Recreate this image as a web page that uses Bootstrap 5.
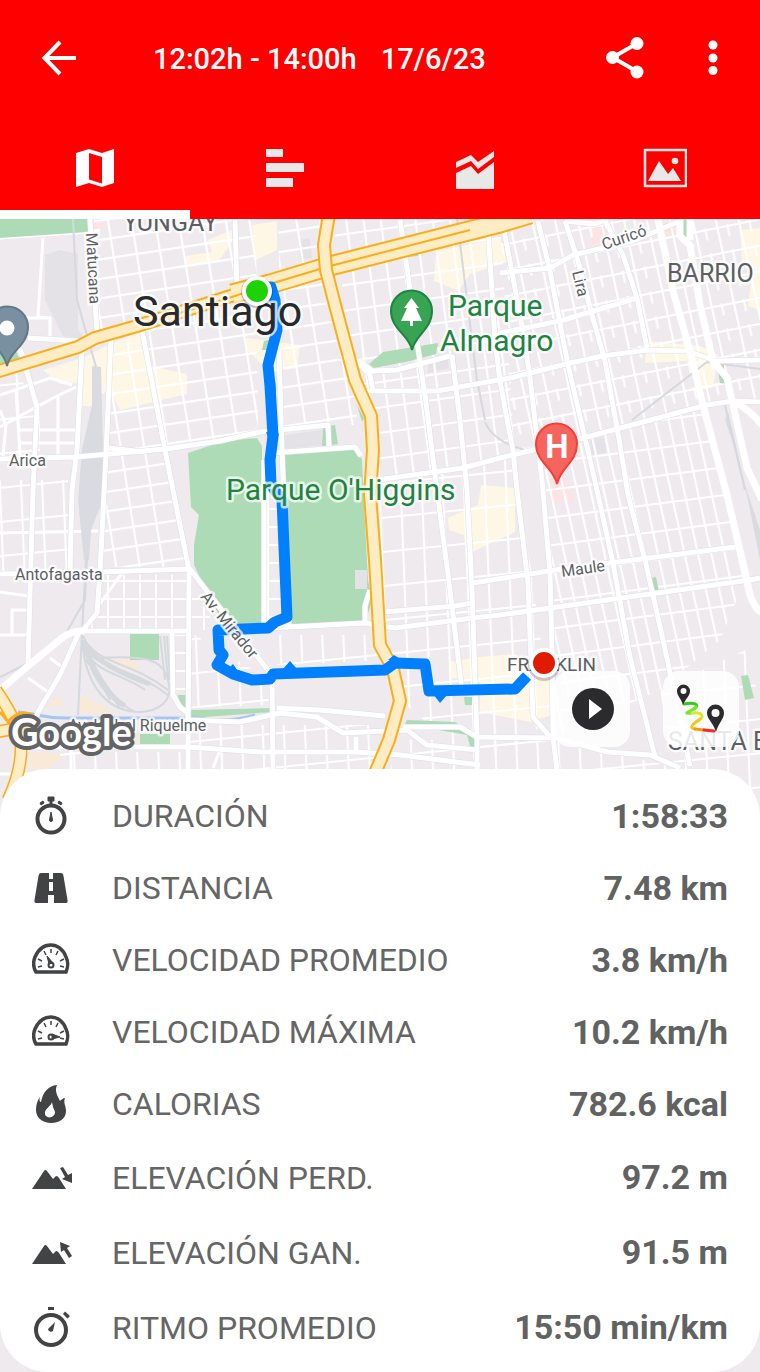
<!DOCTYPE html>
<html lang="es">
<head>
<meta charset="utf-8">
<meta name="viewport" content="width=device-width, initial-scale=1">
<title>Recorrido 17/6/23</title>
<link href="https://cdn.jsdelivr.net/npm/bootstrap@5.3.0/dist/css/bootstrap.min.css" rel="stylesheet">
<style>
  body { font-family: Roboto, "Liberation Sans", sans-serif; background: #eeeaee; }
  .app-header { background: #f00; color: #fff; }
  .app-bar { height: 117px; padding: 0 23px 0 36px; }
  .app-title { font-size: 29px; line-height: 36px; font-weight: 500; margin-left: 69px; gap: 24px; }
  .icon-btn { background: none; border: 0; padding: 0; color: inherit; width: 48px; height: 48px; display: flex; align-items: center; justify-content: center; }
  .app-actions { gap: 40px; }
  .tab-link { height: 102px; color: #e8e8e8; display: flex; align-items: center; justify-content: center; border-bottom: 9px solid transparent; padding-top: 9px; }
  .tab-link.active { color: #fff; border-bottom-color: #fff; }
  .city-map { z-index: 0; }
  .map-tools { min-height: 320px; gap: 33px; padding: 0 21px 22px; z-index: 1; }
  .map-btn { width: 76px; height: 76px; border: 0; border-radius: 16px; background: rgba(255,255,255,.86); padding: 0; }
  .stats { z-index: 1; background: #fff; border-radius: 48px; padding: 11px 32px 7px; }
  .stat-row { height: 72px; }
  .stat-row.tall { height: 75px; }
  .stat-icon { width: 40px; height: 44px; color: #424345; margin-right: 40px; }
  .stat-name { font-size: 32px; color: #666; }
  .stat-value { font-size: 34px; font-weight: 700; color: #616362; }
  .street { font-size: 16px; fill: #5c5f62; }
  .district { font-size: 25px; fill: #5c5f62; }
  .park-name { font-size: 30px; fill: #1e8440; }
  .halo text { paint-order: stroke; stroke: rgba(255,255,255,.72); stroke-width: 5px; stroke-linejoin: round; }
  .blocks path { stroke: #fff; stroke-width: 2px; fill: none; }
</style>
</head>
<body class="min-vh-100 d-flex flex-column">
<header class="app-header">
  <div class="app-bar d-flex align-items-center">
    <button class="icon-btn" type="button" aria-label="Volver">
      <svg width="48" height="48" fill="none" stroke="currentColor" stroke-width="4"><path d="M40 23H9M24 7L8.500 23L24 39"/></svg>
    </button>
    <div class="app-title d-flex flex-grow-1"><span>12:02h - 14:00h</span><span>17/6/23</span></div>
    <div class="app-actions d-flex">
    <button class="icon-btn" type="button" aria-label="Compartir">
      <svg width="48" height="48"><path d="M36 8.500L11.500 22.500L36 36.500" fill="none" stroke="currentColor" stroke-width="4"/><g fill="currentColor"><circle cx="36" cy="8.500" r="6.500"/><circle cx="11.500" cy="22.500" r="6.500"/><circle cx="36" cy="37" r="6.500"/></g></svg>
    </button>
    <button class="icon-btn" type="button" aria-label="Más opciones">
      <svg width="48" height="48" fill="currentColor"><circle cx="24" cy="10" r="4.500"/><circle cx="24" cy="23" r="4.500"/><circle cx="24" cy="35.500" r="4.500"/></svg>
    </button>
    </div>
  </div>
  <nav class="row g-0" aria-label="Vistas">
    <a class="tab-link col-3 active" href="#mapa" aria-label="Mapa" aria-current="page">
      <svg width="40" height="40" fill="currentColor"><path fill-rule="evenodd" d="M1 5L14 1L27 5L39 1V35L27 39L14 35L1 39ZM14 5V31.500L27 35.500V9Z"/></svg>
    </a>
    <a class="tab-link col-3" href="#tramos" aria-label="Tramos">
      <svg width="40" height="40" fill="currentColor"><path d="M1 1H18V9H1ZM1 15H39V24H1ZM1 30H28V39H1Z"/></svg>
    </a>
    <a class="tab-link col-3" href="#graficos" aria-label="Gráficos">
      <svg class="overflow-visible" width="40" height="40" fill="currentColor"><path d="M1 14L16 7L23 14L39 3V9L23 21L16 13L1 20ZM1 25L16 18L23 26L39 14V41H1Z"/></svg>
    </a>
    <a class="tab-link col-3" href="#fotos" aria-label="Fotos">
      <svg width="44" height="40"><rect x="2" y="2" width="41" height="36" fill="none" stroke="currentColor" stroke-width="2.500"/><path d="M5 33L16 13L25 26L30 20L38 33Z" fill="currentColor"/><circle cx="32" cy="13" r="3.300" fill="currentColor"/></svg>
    </a>
  </nav>
</header>

<main class="position-relative flex-grow-1 d-flex flex-column overflow-hidden" id="mapa">
  <svg class="city-map position-absolute top-0 start-0 w-100 h-100" viewBox="0 219 760 1153" preserveAspectRatio="xMidYMin slice" role="img" aria-label="Mapa del recorrido en Santiago">
    <defs class="blocks">
      <pattern id="blocksA" width="23" height="19" patternUnits="userSpaceOnUse" patternTransform="matrix(1 -.15 .16 1 0 0)"><path d="M0 2H23M2 0V19"/></pattern>
      <pattern id="blocksB" width="17" height="25" patternUnits="userSpaceOnUse" patternTransform="matrix(1 -.14 .13 1 4 0)"><path d="M0 2H17M2 0V25"/></pattern>
      <pattern id="blocksC" width="22" height="25" patternUnits="userSpaceOnUse" patternTransform="matrix(1 -.2 .22 1 0 4)"><path d="M0 2H22M2 0V25M12 0V12"/></pattern>
      <pattern id="blocksD" width="13" height="27" patternUnits="userSpaceOnUse" patternTransform="matrix(1 -.13 .22 1 0 4)"><path d="M0 2H13M2 0V27"/></pattern>
      <pattern id="blocksE" width="16" height="18" patternUnits="userSpaceOnUse"><path d="M0 5H16M12 0V18"/></pattern>
      <pattern id="blocksF" width="21" height="34" patternUnits="userSpaceOnUse" patternTransform="matrix(1 -.1 .04 1 0 8)"><path d="M0 2H21M2 0V34"/></pattern>
    </defs>
    <defs>
      <g id="avenues">
        <path d="M90 219L97 333M82 350L77 450L72 490L70 573M111 338L106 455L100 572L97 613L83 630M142 330L165 450L189 570L188 770M20 348L37 407L33 490L28 663M0 459L75 457L110 454L165 449L220 441L260 432L328 425L329 446M108 448L145 452M270 453L355 447L361 456M28 338L80 341M0 574L100 572L190 569L274 678M80 630L60 675L38 712L20 770M80 631H188M172 633L173 695L180 707L188 713V720L240 722L280 713L317 717L343 733L407 730L427 745L477 750M30 747H83L188 747L260 752L355 752L400 755L480 765"/>
        <path d="M235 219L237 290M279 350L282 450L289 628M400 219L410 290L420 362L425 395L437 490L450 590L462 690M488 228L495 340L500 381L513 451L517 490L528 583L533 717L550 737M452 355L460 421L467 490L472 590L477 737V790M503 225L522 325L530 378L542 480L550 573L552 650L553 737L557 770M538 221L550 271L568 365L585 438L597 490L613 563L630 657L655 757M565 221L578 261L592 315L605 361L620 445L628 495L645 560L663 640L690 766M605 221L623 255L637 298L647 348"/>
        <path d="M500 273L550 268L573 255L633 241L680 221M565 221L595 224L608 219M500 333L560 321L637 298M358 360L372 371L397 370L450 356M367 391L437 391L510 378L570 363L603 356L647 350L687 351L717 361L760 360M377 480L463 468L500 458L583 438L707 405L733 401L760 402M383 612L455 606L472 603M473 583L555 570L735 547M270 628L365 623L395 628L473 618L500 615L750 580L760 578M264 460V628M272 675L273 770M277 708L320 710L385 716M403 727H460L477 737L557 738L607 752L650 755L680 768M356 737V750M365 623V606L370 590M353 358L370 375L373 391"/>
      </g>
    </defs>
    <rect y="219" width="760" height="1153" fill="#eeeaee"/>

    <!-- built-up, commercial and hospital areas -->
    <g fill="#e5e2e7"><path d="M45 255L60 250L78 254V330L90 345L70 350L45 300ZM299 240L310 238L312 258L300 260ZM285 435L322 430V445L285 449ZM590 440L605 436L606 453L592 455ZM428 364L448 359L449 368L428 373Z"/></g>
    <g fill="#fef7e5">
      <path d="M43 370L82 358L140 330L150 366L187 374V394L120 410L110 390L95 398L93 406H82V383L60 384ZM185 256L212 252L208 240L232 230V242L218 262L186 266ZM252 225L277 221L277 250L256 260ZM246 338L300 345L297 368L270 372L247 350ZM436 251L458 247L500 238L507 262L470 274L458 291L434 281Z"/>
      <path d="M646 341L700 346L718 355L713 388L702 389L688 361L645 363ZM448 518L478 505L481 485L515 488V532L466 555L464 535L449 530ZM450 662L478 657L515 654L551 680L552 715L530 722L480 712V682L452 678ZM740 230L760 228V310L748 306L752 275L742 262Z"/>
    </g>
    <g fill="#f9ead7"><path d="M80 695L116 713H80ZM104 660H134L142 670L124 668ZM46 706L58 696L65 706ZM30 752L65 754L48 770L28 768ZM104 728H139V745H112Z"/></g>
    <g fill="#fde3e3"><path d="M93 219H103V229L93 230ZM592 229L607 225L615 241L590 246ZM663 222L674 223L676 236L665 239ZM548 478L566 478L574 501L549 503Z"/></g>

    <!-- minor street grid -->
    <path fill="url(#blocksA)" d="M94 219H256L258 436L166 448L143 333L96 340ZM113 338L140 338L164 450L109 450Z"/>
    <path fill="url(#blocksA)" d="M108 455L166 450L188 567H103ZM278 215H320L328 290L358 410L355 425L282 430Z"/>
    <path fill="url(#blocksB)" d="M340 266L500 225L515 455L376 480L375 420L350 360ZM335 219H480L335 255Z"/>
    <path fill="url(#blocksC)" d="M500 219H760V398L707 405L583 438L513 453Z"/>
    <path fill="url(#blocksD)" d="M583 440L705 407L745 580L720 640L660 690L553 738L545 470Z"/>
    <path fill="url(#blocksF)" d="M378 482L515 455L552 720L478 765L400 700L385 650ZM0 480H68V572H0ZM277 635H377L390 660L277 665ZM190 632L262 675L270 705L190 708Z"/>
    <path fill="url(#blocksE)" d="M100 575H188V628H90ZM173 635H188V708L175 698ZM190 585L218 630H190ZM264 485H285V628H264Z"/>
    <path fill="url(#blocksF)" d="M188 725H385V790H60V752H188ZM400 740L550 740L680 768H760V800H380ZM0 345L40 410V455H0ZM660 690L745 650L760 700V800H680Z"/>
    <g fill="none" stroke="#fff" stroke-width="3"><path d="M43 238L38 317L50 318V340M0 318H50M0 395L50 378L72 385M0 427L55 397L76 387M16 390L20 455M0 410L6 425L3 457M58 397V457M20 430H75M20 443H75M0 533L98 531M0 592L28 596M0 635H28M11 610H28M12 610V635M122 573L100 604M28 678L48 692M50 658L62 667M0 774H75M71 750V790M220 750L213 768M0 238L88 232L100 230"/></g>

    <!-- parks -->
    <g fill="#addbb5">
      <path d="M0 219H88V232L0 238ZM0 352L14 347L20 360L0 367ZM188 453L224 441L257 438L262 446V485L262 578L267 588L262 603V625H224L206 590L194 565V545L199 515L191 507ZM285 455L356 449L362 460L364 505L368 580L372 600L366 621L290 625L283 500Z"/>
      <path d="M323 427L335 425L338 444L322 446ZM369 364L383 352L438 343L436 354L410 361L374 368ZM357 405L364 418L362 422ZM264 341L270 340L267 350L262 350ZM409 253L418 251L418 256L408 257ZM679 219H689L690 236L684 238ZM717 364L723 361L727 384L720 383ZM651 578L656 577L659 592L653 593ZM741 676L748 675L754 698L745 700ZM130 634H159V660H130ZM178 695H187V707H180ZM191 710L272 708V712L191 718ZM140 734H170V746H140ZM407 720L455 722L475 735V750L471 750L467 735L405 724ZM464 697H472V705H465Z"/>
    </g>
    <path d="M355 570H367V589H355Z" fill="#e5e2e7"/>

    <!-- railways -->
    <path d="M92 366L101 367L103 450L103 500L91 530L89 560L84 560L78 500L82 450L92 405Z" fill="#d9dbe0"/>
    <path d="M725 420L732 440L747 495L760 560V530L745 485L728 412Z" fill="#d9dbe0"/>
    <g fill="none" stroke="#d5d8dd" stroke-width="2"><path d="M73 219L77 300L96 367M87 555L85 600L65 635M86 560L82 632L78 715M83 636C95 665 130 660 168 690M83 640C90 670 130 665 168 695M83 645C95 675 120 672 145 690M82 640C86 690 110 712 140 712C160 711 172 700 169 685C165 660 150 655 100 658M84 650L110 700M86 660L120 708M84 640C100 685 120 705 135 712M160 636L165 680M164 636L168 680M167 636L170 680M0 677L30 662M707 362L632 420M707 362L760 369M725 405L745 490M485 422C490 435 505 445 525 450M457 219L477 380L485 420"/><path stroke-width="5" d="M86 648Q105 668 150 684M86 650Q98 690 125 706"/></g>

    <!-- river -->
    <path d="M18 712C40 714 45 719 70 718H190M192 717Q225 724 255 715" fill="none" stroke="#a5c5f4" stroke-width="3"/>

    <!-- avenues: grey casing, then white fill -->
    <g fill="none" stroke-linejoin="round">
      <use href="#avenues" stroke="#dcdfe6" stroke-width="6"/>
      <use href="#avenues" stroke="#fff" stroke-width="5"/>
      <g stroke="#fff" stroke-width="7"><path d="M0 690L28 666L62 638Q72 630 84 631M658 219L673 291L690 351L703 405L727 495L747 580Q750 605 762 613M680 219V236L690 245L700 305L713 361L727 378L733 405L747 468L762 500M690 219V240M735 402Q750 410 762 425"/></g>

      <!-- motorways -->
      <g stroke="#fbae17" stroke-width="14"><path d="M-4 372L78 347L95 338L137 326L240 293"/><path d="M-4 690Q20 725 21 745Q22 770 8 800M-4 732L30 726" stroke-width="13"/></g>
      <g stroke="#fbae17" stroke-width="21"><path d="M232 294L270 284L330 266L500 223L530 214"/></g>
      <path stroke="#feecc5" stroke-width="10" d="M-4 372L78 347L95 338L137 326L240 293"/>
      <path stroke="#feecc5" stroke-width="17" d="M232 294L270 284L330 266L500 223L530 214"/>
      <path stroke="#fbae17" stroke-width="2" d="M140 325L232 297L270 284L330 266L470 230"/>
      <path stroke="#fbae17" stroke-width="14" d="M329 214L324 245L326 270L335 305L355 380L371 416L373 450L370 495L375 560L380 645L393 669L400 701L389 740L370 785"/>
      <path stroke="#feecc5" stroke-width="10" d="M329 214L324 245L326 270L335 305L355 380L371 416L373 450L370 495L375 560L380 645L393 669L400 701L389 740L370 785M-4 690Q20 725 21 745Q22 770 8 800M-4 732L30 726"/>
      <path stroke="#fbae17" stroke-width="3" d="M8 722Q20 708 34 716M24 730H62M0 712L10 724"/>
    </g>

    <!-- recorded route -->
    <path d="M256 290L271 287L275 300L277 330L268 365L270 386L273 436L270 460L271 485L282 500L287 617L275 622L268 628L218 630L219 650L223 655L217 665L233 674L252 680L270 679L273 674L385 670L395 663L425 664L429 691L515 689L527 676" fill="none" stroke="#0080ff" stroke-width="11" stroke-linejoin="round"/>
    <path d="M283 669L290 661L297 669ZM433 694L440 703L448 694ZM225 672L233 664L240 674ZM265 385L275 380L276 392ZM266 432L279 434L272 448ZM388 660L394 655L402 660Z" fill="#0080ff"/>

    <!-- place names -->
    <g class="halo">
      <text class="district" x="123" y="231">YUNGAY</text>
      <text class="district" x="667" y="282">BARRIO</text>
      <text class="district" x="668" y="750">SANTA ELENA</text>
      <text x="507" y="671" font-size="19" fill="#5c5f62">FRANKLIN</text>
      <text x="133" y="326" font-size="43" fill="#28292c">Santiago</text>
      <text class="park-name" x="448" y="316">Parque</text>
      <text class="park-name" x="440" y="351">Almagro</text>
      <text class="park-name" x="226" y="500">Parque O'Higgins</text>
      <text class="street" x="9" y="466">Arica</text>
      <text class="street" x="15" y="580">Antofagasta</text>
      <text class="street" x="68" y="731">Av. Isabel Riquelme</text>
      <text class="street" transform="translate(86 233) rotate(87)">Matucana</text>
      <text class="street" transform="translate(604 250) rotate(-19)">Curicó</text>
      <text class="street" transform="translate(572 272) rotate(76)">Lira</text>
      <text class="street" transform="translate(562 577) rotate(-8)">Maule</text>
      <text class="street" transform="translate(200 597) rotate(51)">Av. Mirador</text>
    </g>

    <!-- place pins -->
    <path d="M7 366C5 351 -13 345 -13 327A20 20 0 0 1 28 327C28 345 10 351 7 366Z" fill="#7890a0" stroke="#617987" stroke-width="2"/><circle cx="7" cy="328" r="7.500" fill="#fff"/>
    <path d="M412 350C409 335 391 329 391 311A20.500 20.500 0 0 1 432 311C432 329 415 335 412 350Z" fill="#36a452" stroke="#1e8440" stroke-width="2"/>
    <path d="M411.500 298L419 308H416L422 321H413V326H410V321H401L407 308H404Z" fill="#fff"/>
    <path d="M557 484C554 468 536 462 536 444A20.500 20.500 0 0 1 577 444C577 462 560 468 557 484Z" fill="#f5655d" stroke="#fa3c35" stroke-width="2"/>
    <text x="557" y="458" font-size="33" font-weight="700" text-anchor="middle" fill="#fff">H</text>

    <!-- start and finish -->
    <g stroke="#fff" stroke-width="4"><circle cx="257" cy="292" r="16" fill="#0003" stroke="none"/><circle cx="257" cy="291" r="13" fill="#1dd306"/><circle cx="544" cy="665" r="16" fill="#0003" stroke="none"/><circle cx="544" cy="663" r="13" fill="#e01b00"/></g>
    <text x="11" y="746" font-family="Lato, sans-serif" font-weight="700" font-size="38" fill="#fff" stroke="#626465" stroke-width="8" stroke-linejoin="round" paint-order="stroke">Google</text>
  </svg>

  <div class="map-tools position-relative flex-grow-1 d-flex align-items-end justify-content-end">
    <button class="map-btn" type="button" aria-label="Reproducir recorrido">
      <svg width="76" height="76"><circle cx="39" cy="38" r="21" fill="#2b2b2d"/><path d="M35 28V48L48 38Z" fill="#fff"/></svg>
    </button>
    <button class="map-btn" type="button" aria-label="Colores del recorrido">
      <svg width="76" height="76" fill="none" stroke-width="3" stroke-linecap="round"><path d="M21 33C30 31 38 33 31 38" stroke="#35c91c"/><path d="M33 36C27 41 18 43 29 42" stroke="#76e830"/><path d="M29 42C38 41 43 45 35 50" stroke="#dce52c"/><path d="M37 48C30 53 25 57 32 58" stroke="#f2c916"/><path d="M32 58L41 59" stroke="#ff9419"/><path d="M41 59L51 60" stroke="#f02a20"/><g fill="#2b2b2d" stroke="none" fill-rule="evenodd"><path d="M20 34C18 27 14 25 14 20A6.500 6.500 0 0 1 27 20C27 25 23 27 20 34ZM20.500 17A3 3 0 1 0 20.500 23A3 3 0 1 0 20.500 17"/><path d="M53 61C51 53 44 48 44 42A8.500 8.500 0 0 1 61 42C61 48 55 53 53 61ZM52.500 38A4 4 0 1 0 52.500 46A4 4 0 1 0 52.500 38"/></g></svg>
    </button>
  </div>

  <section class="stats position-relative" aria-label="Resumen">
    <ul class="list-unstyled mb-0">
      <li class="stat-row d-flex align-items-center">
        <svg class="stat-icon" viewBox="0 0 40 44"><circle cx="19" cy="25" r="13.500" fill="none" stroke="currentColor" stroke-width="4"/><path d="M16 3H22V7H20V10H18V7H16ZM8 9L11 7L12 9L9 11ZM30 9L27 7L26 9L29 11ZM19 18L20.500 26A1.500 1.500 0 0 1 17.500 26Z" fill="currentColor" stroke="currentColor"/></svg>
        <span class="stat-name">DURACIÓN</span><strong class="stat-value ms-auto">1:58:33</strong>
      </li>
      <li class="stat-row d-flex align-items-center">
        <svg class="stat-icon" viewBox="0 0 40 44"><path fill="currentColor" fill-rule="evenodd" d="M9 7H17V13H21V7H29Q31 7 31.500 10L35.500 34Q36 37 34 37H22V29H16V37H4Q2 37 2.500 34L6.500 10Q7 7 9 7ZM17 16V25H21V16Z"/></svg>
        <span class="stat-name">DISTANCIA</span><strong class="stat-value ms-auto">7.48 km</strong>
      </li>
      <li class="stat-row d-flex align-items-center">
        <svg class="stat-icon" viewBox="0 0 40 44" fill="none" stroke="currentColor"><path d="M4 34C1 29 1 24 3 19C10 3 28 3 34 19C37 25 36 29 34 34Z" stroke-width="3.500"/><path d="M6 29L10 28M6 21L10 23M12 13L14 17M19 11V15M26 13L24 17M32 21L28 23M32 29L28 28" stroke-width="1.500"/><circle cx="19" cy="27" r="2.500" stroke-width="2"/><path d="M15 18L21 25L17 26Z" fill="currentColor"/></svg>
        <span class="stat-name">VELOCIDAD PROMEDIO</span><strong class="stat-value ms-auto">3.8 km/h</strong>
      </li>
      <li class="stat-row d-flex align-items-center">
        <svg class="stat-icon" viewBox="0 0 40 44" fill="none" stroke="currentColor"><path d="M4 34C1 29 1 24 3 19C10 3 28 3 34 19C37 25 36 29 34 34Z" stroke-width="3.500"/><path d="M6 29L10 28M6 21L10 23M12 13L14 17M19 11V15M26 13L24 17M32 21L28 23M32 29L28 28" stroke-width="1.500"/><circle cx="19" cy="27" r="2.500" stroke-width="2"/><path d="M20 24L28 27L20 29Z" fill="currentColor"/></svg>
        <span class="stat-name">VELOCIDAD MÁXIMA</span><strong class="stat-value ms-auto">10.2 km/h</strong>
      </li>
      <li class="stat-row d-flex align-items-center">
        <svg class="stat-icon" viewBox="0 0 40 44"><path fill="currentColor" fill-rule="evenodd" d="M25 3C22.500 9 25 13 28 19C29 18 31 16 33 16C31 21 34 24 34 29C34 37 27 41 19 41C11 41 4 36 4 28C4 23 5 19 8 15C7 19 8 20 9 20C11 10 16 4 25 3ZM20 20C19 24 14 26 13 30C12 35 18 37 21 34C25 31 22 28 21 25Z"/></svg>
        <span class="stat-name">CALORIAS</span><strong class="stat-value ms-auto">782.6 kcal</strong>
      </li>
      <li class="stat-row tall d-flex align-items-center">
        <svg class="stat-icon overflow-visible" viewBox="0 0 40 44"><path fill="currentColor" d="M0 33L12 15Q13 13 15 15L21 23L24 20Q26 20 27 22L34 33ZM28 12L31 11L36 19L40 17V27L30 23L33 21Z"/></svg>
        <span class="stat-name">ELEVACIÓN PERD.</span><strong class="stat-value ms-auto">97.2 m</strong>
      </li>
      <li class="stat-row tall d-flex align-items-center">
        <svg class="stat-icon overflow-visible" viewBox="0 0 40 44"><path fill="currentColor" d="M0 33L12 15Q13 13 15 15L21 23L24 20Q26 20 27 22L34 33ZM28 11L38 15L35 17L40 25L37 27L32 19L29 21Z"/></svg>
        <span class="stat-name">ELEVACIÓN GAN.</span><strong class="stat-value ms-auto">91.5 m</strong>
      </li>
      <li class="stat-row tall d-flex align-items-center">
        <svg class="stat-icon" viewBox="0 0 40 44"><circle cx="19" cy="24" r="15" fill="none" stroke="currentColor" stroke-width="4"/><path fill="currentColor" d="M16 1H22V4H16ZM33 5.500L38 10L35.500 12.500L31 8ZM23 16L21 25A3 3 0 0 1 16 23Z"/></svg>
        <span class="stat-name">RITMO PROMEDIO</span><strong class="stat-value ms-auto">15:50 min/km</strong>
      </li>
    </ul>
  </section>
</main>
<script src="https://cdn.jsdelivr.net/npm/bootstrap@5.3.0/dist/js/bootstrap.bundle.min.js"></script>
</body>
</html>
